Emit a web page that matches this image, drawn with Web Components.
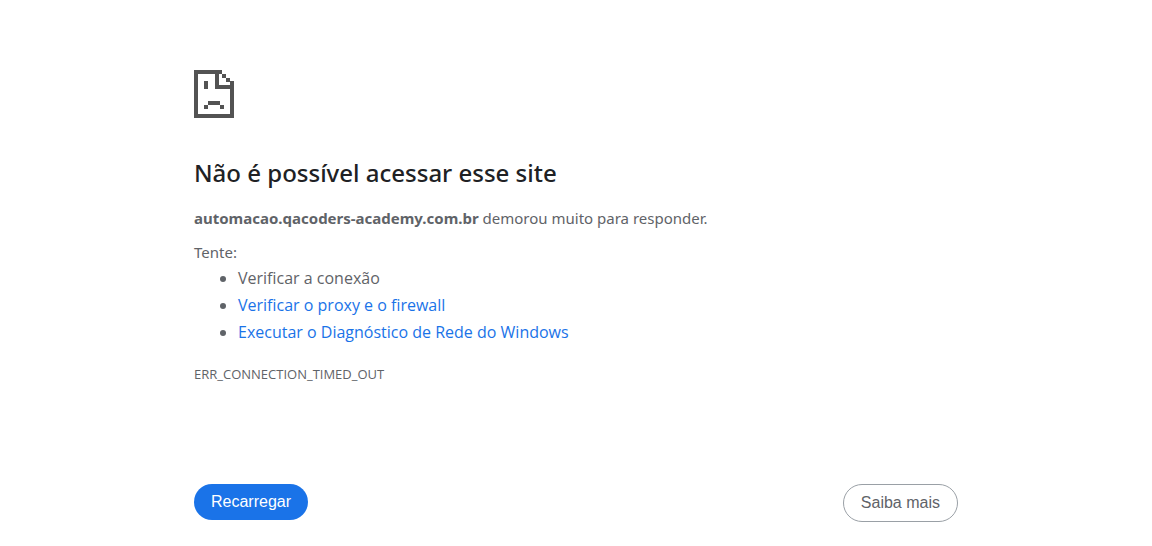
<!DOCTYPE html>
<html lang="pt-BR">
<head>
<meta charset="utf-8">
<meta name="viewport" content="width=device-width, initial-scale=1">
<title>automacao.qacoders-academy.com.br</title>
<style>
body { margin: 0; background: #fff; color: #5f6368; font-family: "Segoe UI", "Noto Sans", sans-serif; }
</style>
</head>
<body>
<net-error>
  <sad-page slot="icon"></sad-page>
  <error-message host="automacao.qacoders-academy.com.br" code="ERR_CONNECTION_TIMED_OUT"></error-message>
  <pill-button slot="actions" primary>Recarregar</pill-button>
  <pill-button slot="actions">Saiba mais</pill-button>
</net-error>
<script>
class NetError extends HTMLElement {
  constructor() {
    super();
    this.attachShadow({ mode: "open" }).innerHTML = `
      <style>
        :host { display: block; box-sizing: border-box; max-width: 812px; margin: 0 auto; padding: 70px 24px 24px; }
        footer { display: flex; justify-content: space-between; align-items: flex-start; margin-top: 101px; }
      </style>
      <main><slot name="icon"></slot><slot></slot></main>
      <footer><slot name="actions"></slot></footer>`;
  }
}
class SadPage extends HTMLElement {
  constructor() {
    super();
    this.attachShadow({ mode: "open" }).innerHTML = `
      <style>
        :host { display: block; margin-bottom: 37px; }
        svg { display: block; }
      </style>
      <svg width="40" height="48" viewBox="0 0 40 48" fill="#535353" shape-rendering="crispEdges" aria-hidden="true">
        <path d="M0 0H28V4H4V44H36V19H21V4H25V15H36V11H40V48H0Z"/>
        <path d="M28 4h4v4h-4zM32 8h4v4h-4zM10 11h4v8h-4zM14 31h12v4H14zM10 35h4v4h-4zM26 35h4v4h-4z"/>
      </svg>`;
  }
}
class ErrorMessage extends HTMLElement {
  constructor() {
    super();
    this.attachShadow({ mode: "open" }).innerHTML = `
      <style>
        :host { display: block; font-size: 15px; line-height: 24px; }
        h1 { margin: 0 0 15px; color: #202124; font-size: 24px; font-weight: 500; line-height: 36px; }
        p { margin: 0 0 10px; }
        .hint { margin: 0 0 1px; }
        ul { margin: 0; padding-left: 44px; font-size: 16px; line-height: 27px; }
        ul, .code { font-family: "Segoe UI", "Open Sans", "Noto Sans", sans-serif; }
        a { color: #1a73e8; text-decoration: none; }
        .code { margin: 19px 0 0; font-size: 13px; line-height: 18px; }
      </style>
      <h1>Não é possível acessar esse site</h1>
      <p><strong></strong> demorou muito para responder.</p>
      <p class="hint">Tente:</p>
      <ul>
        <li>Verificar a conexão</li>
        <li><a href="#proxy">Verificar o proxy e o firewall</a></li>
        <li><a href="#diagnostico">Executar o Diagnóstico de Rede do Windows</a></li>
      </ul>
      <p class="code"></p>`;
  }
  connectedCallback() {
    this.shadowRoot.querySelector("strong").textContent = this.getAttribute("host");
    this.shadowRoot.querySelector(".code").textContent = this.getAttribute("code");
  }
}
class PillButton extends HTMLElement {
  constructor() {
    super();
    this.attachShadow({ mode: "open" }).innerHTML = `
      <style>
        :host { display: block; }
        button { display: block; margin: 0; padding: 9px 17px; border: 1px solid #9aa0a6; border-radius: 20px; background: #fff; color: #5f6368; font: 16px/18px "Liberation Sans", Arial, sans-serif; cursor: pointer; }
        :host([primary]) button { border: 0; background: #1a73e8; color: #fff; }
      </style>
      <button type="button"><slot></slot></button>`;
  }
}
customElements.define("net-error", NetError);
customElements.define("sad-page", SadPage);
customElements.define("error-message", ErrorMessage);
customElements.define("pill-button", PillButton);
</script>
</body>
</html>
